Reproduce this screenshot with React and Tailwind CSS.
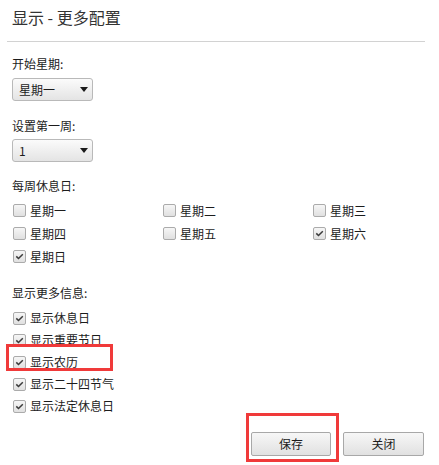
import React from "react";

const font = { fontFamily: '"Noto Sans CJK SC", "Noto Sans", sans-serif' };

function Check({ checked, label }) {
  return (
    <div className="flex items-center h-full">
      <span className="ml-px w-[13px] h-[13px] rounded-[2px] border border-[#ababab] bg-linear-to-b from-[#f6f6f6] to-[#e0e0e0] flex items-center justify-center">
        {checked && (
          <svg width="9" height="7" viewBox="0 0 9 7">
            <path d="M1.3 3.4 L3.5 5.5 L7.8 1.2" fill="none" stroke="#3a3a3a" strokeWidth="1.5" />
          </svg>
        )}
      </span>
      <span className="ml-[4px] text-[12px] leading-[16px] text-[#1c1c1c]">{label}</span>
    </div>
  );
}

function Select({ value }) {
  return (
    <div className="w-[81px] h-[23px] rounded-[3px] border border-[#b9b9b9] bg-linear-to-b from-[#fbfbfb] to-[#e4e4e4] flex items-center justify-between pl-[6px] pr-[4px]">
      <span className="text-[12px] leading-[16px] text-[#1c1c1c]">{value}</span>
      <svg width="8" height="5" viewBox="0 0 8 5">
        <path d="M0 0 H8 L4 5 Z" fill="#1a1a1a" />
      </svg>
    </div>
  );
}

export default function App() {
  const weekdays = [
    ["星期一", false],
    ["星期二", false],
    ["星期三", false],
    ["星期四", false],
    ["星期五", false],
    ["星期六", true],
    ["星期日", true],
  ];
  const more = ["显示休息日", "显示重要节日", "显示农历", "显示二十四节气", "显示法定休息日"];

  return (
    <div className="relative w-[439px] h-[465px] bg-white overflow-hidden" style={font}>
      <div className="pl-3 pt-[8px] h-[41px] text-[16px] leading-[18px] text-[#333]">显示 - 更多配置</div>
      <div className="ml-[7px] w-[418px] h-px bg-[#d2d2d2]" />

      <div className="pl-3">
        <div className="mt-[14px] text-[12px] leading-[16px] text-[#1c1c1c]">开始星期:</div>
        <div className="mt-[6px]">
          <Select value="星期一" />
        </div>

        <div className="mt-[17px] text-[12px] leading-[16px] text-[#1c1c1c]">设置第一周:</div>
        <div className="mt-[5px]">
          <Select value="1" />
        </div>

        <div className="mt-[16px] text-[12px] leading-[16px] text-[#1c1c1c]">每周休息日:</div>
        <div className="mt-[5px] grid grid-cols-[150px_150px_1fr] auto-rows-[23px]">
          {weekdays.map(([d, c]) => (
            <Check key={d} label={d} checked={c} />
          ))}
        </div>

        <div className="mt-[17px] text-[12px] leading-[16px] text-[#1c1c1c]">显示更多信息:</div>
        <div className="mt-[6px] flex flex-col">
          {more.map((m) => (
            <div key={m} className="h-[22px]">
              <Check label={m} checked />
            </div>
          ))}
        </div>
      </div>

      <div className="mt-[15px] flex justify-end gap-[12px] pr-[15px]">
        <button className="w-[80px] h-[24px] rounded-[2px] border border-[#a8a8a8] bg-linear-to-b from-[#f7f7f7] to-[#e1e1e1] text-[12px] text-[#1c1c1c]">
          保存
        </button>
        <button className="w-[81px] h-[24px] rounded-[2px] border border-[#a8a8a8] bg-linear-to-b from-[#f7f7f7] to-[#e1e1e1] text-[12px] text-[#1c1c1c]">
          关闭
        </button>
      </div>

      <div className="absolute left-[6px] top-[344px] w-[107px] h-[27px] border-[3px] border-[#f03a3a]" />
      <div className="absolute left-[246px] top-[413px] w-[93px] h-[49px] border-[3px] border-[#f03a3a]" />
    </div>
  );
}
